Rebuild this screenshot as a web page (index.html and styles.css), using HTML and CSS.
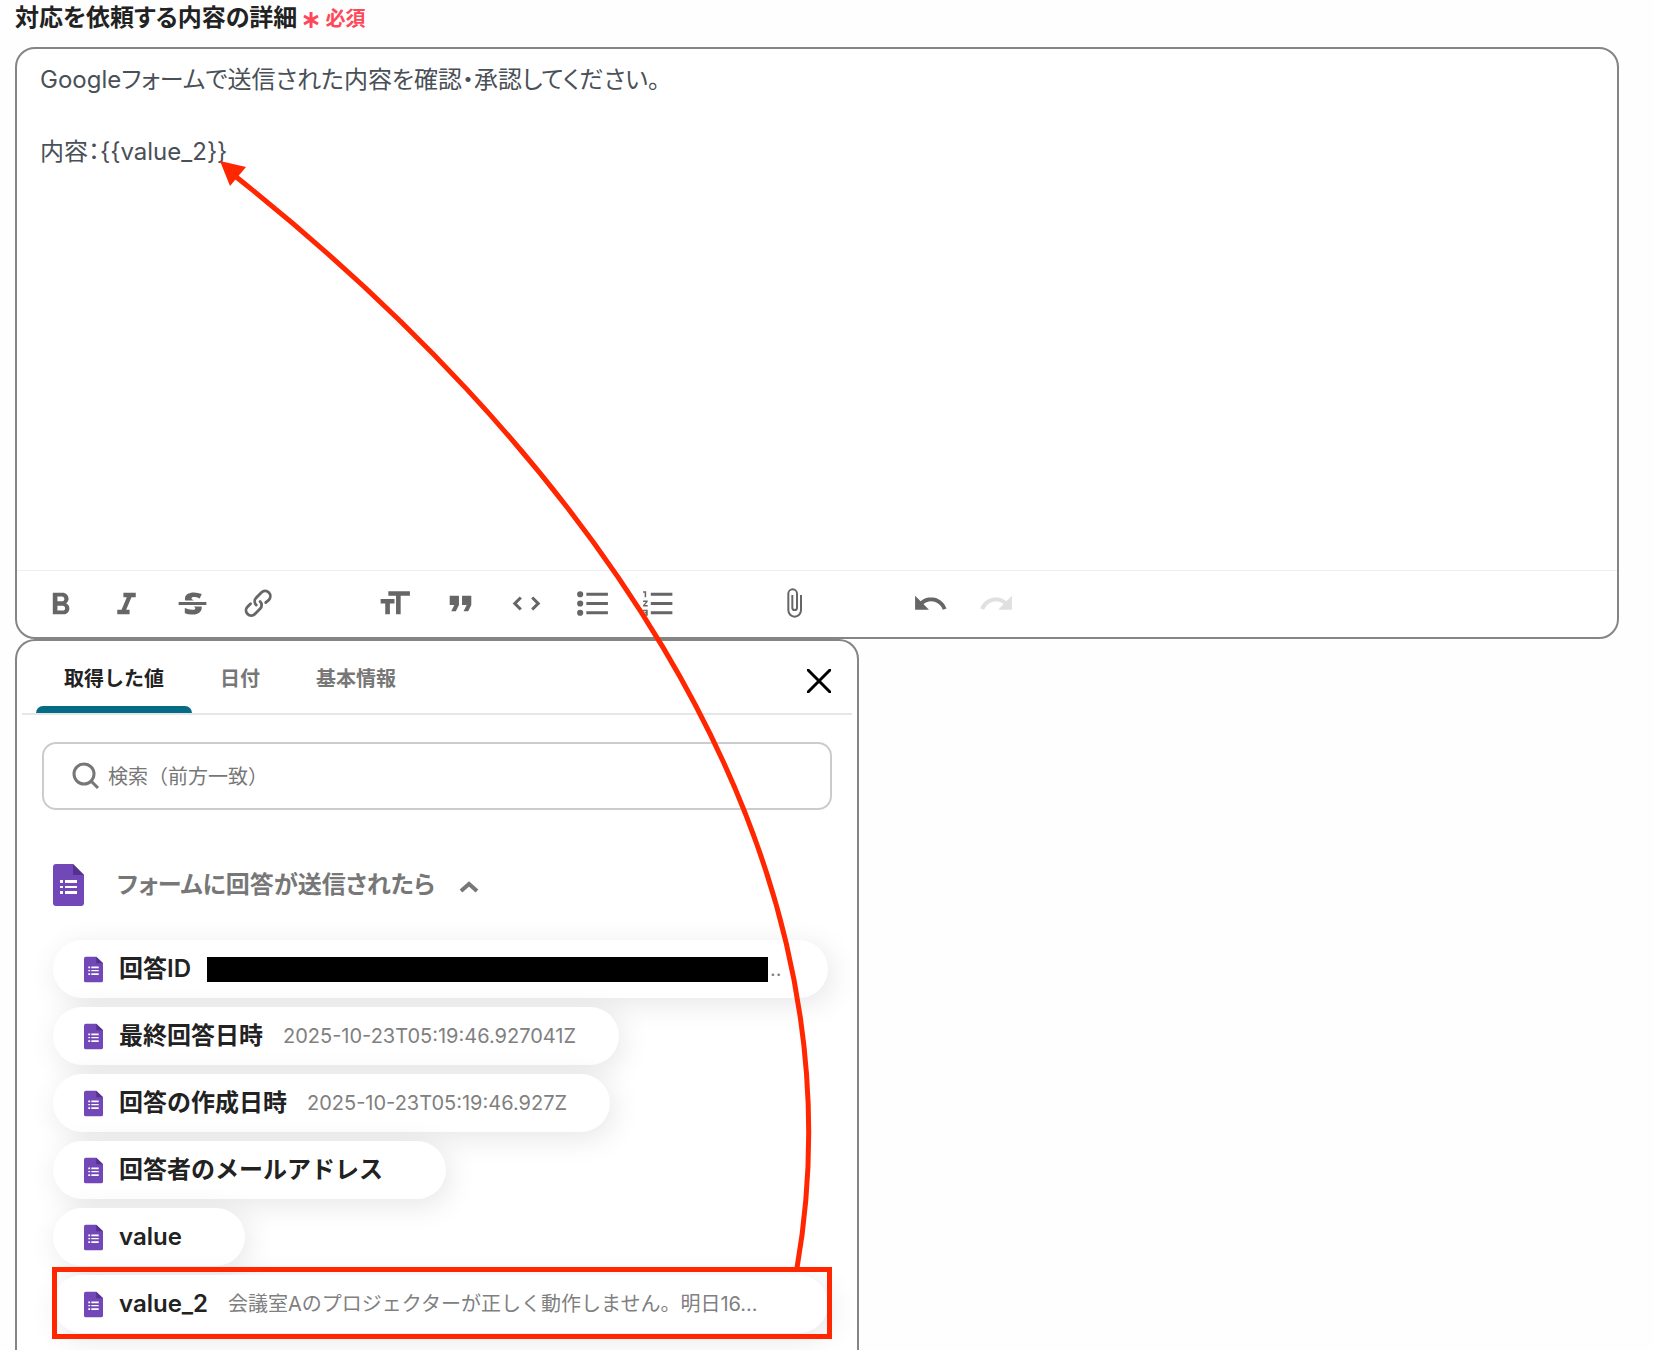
FILE: index.html
```html
<!DOCTYPE html>
<html lang="ja">
<head>
<title>対応を依頼する</title>
<meta charset="UTF-8">
<meta name="viewport" content="width=device-width, initial-scale=1.0">
<link rel="stylesheet" href="styles.css">
</head>
<body>
<svg class="defs" aria-hidden="true">
<symbol id="form-icon" viewBox="0 0 31 42">
<path d="M3 0h17l11 11v28a3 3 0 0 1-3 3H3a3 3 0 0 1-3-3V3a3 3 0 0 1 3-3z" fill="#7248b9"/>
<path d="M20 0l11 11H20z" fill="#54318c"/>
<path d="M12 16h12v3H12zM12 22h12v2H12zM12 27h12v3H12zM7 16h3v3H7zM7 22h3v2H7zM7 27h3v3H7z" fill="#fff"/>
</symbol>
</svg>
<div class="page">
<label class="field-label" for="detail">対応を依頼する内容の詳細 <span class="required"><svg viewBox="0 0 16 16"><path d="M8 0v16M1 4l14 8M15 4L1 12"/></svg>必須</span></label>
<div class="editor">
<textarea id="detail" name="detail">Googleフォームで送信された内容を確認・承認してください。

内容：{{value_2}}</textarea>
<div class="toolbar">
<div class="tool-group">
<button type="button" aria-label="太字"><svg viewBox="0 0 24 24"><path d="M15.600 11.790c.97-.67 1.650-1.770 1.650-2.790 0-2.260-1.750-4-4-4H7v14h7.040c2.090 0 3.710-1.700 3.710-3.790 0-1.520-.86-2.820-2.150-3.420zM10 7.500h3c.83 0 1.500.67 1.500 1.500s-.67 1.500-1.500 1.500h-3v-3zm3.500 9H10v-3h3.500c.83 0 1.500.67 1.500 1.500s-.67 1.500-1.500 1.500z"/></svg></button>
<button type="button" aria-label="斜体"><svg viewBox="0 0 24 24"><path d="M10 5v3h2.210l-3.420 8H6v3h8v-3h-2.210l3.420-8H18V5z"/></svg></button>
<button type="button" aria-label="取り消し線"><svg viewBox="0 0 24 24"><path d="M12.730 14l.28.14c.26.15.45.3.57.44.12.14.18.3.18.5 0 .3-.15.56-.44.75-.3.2-.76.3-1.390.3A13.520 13.520 0 0 1 7 14.950v3.370a10.640 10.640 0 0 0 4.840.88c1.260 0 2.350-.19 3.280-.56.93-.37 1.640-.9 2.140-1.570s.74-1.450.74-2.320c0-.26-.02-.51-.06-.75h-5.210zm-5.500-4c-.08-.34-.12-.7-.12-1.100 0-1.290.52-2.300 1.580-3.020 1.050-.72 2.500-1.080 4.340-1.080 1.620 0 3.280.34 4.970 1l-1.300 2.930c-1.470-.6-2.730-.9-3.800-.9-.55 0-.96.08-1.200.26-.26.17-.38.38-.38.64 0 .27.16.52.48.74.17.12.53.3 1.050.53H7.230zM3 13h18v-2H3v2z"/></svg></button>
<button type="button" aria-label="リンク"><svg viewBox="0 0 24 24"><path d="M9.880 13.700a4.300 4.300 0 0 1 0-6.070l3.370-3.370a4.260 4.260 0 0 1 6.070 0 4.300 4.300 0 0 1 0 6.060l-1.960 1.720a.91.91 0 1 1-1.300-1.300l1.970-1.710a2.460 2.460 0 0 0-3.480-3.480l-3.380 3.370a2.460 2.460 0 0 0 0 3.480.91.91 0 1 1-1.300 1.300z"/><path d="M4.250 19.460a4.300 4.300 0 0 1 0-6.070l1.930-1.900a.91.91 0 1 1 1.300 1.300l-1.930 1.900a2.460 2.460 0 0 0 3.480 3.480l3.370-3.380c.96-.96.96-2.520 0-3.480a.91.91 0 1 1 1.300-1.300 4.300 4.300 0 0 1 0 6.070l-3.380 3.380a4.260 4.260 0 0 1-6.070 0z"/></svg></button>
</div>
<div class="tool-group">
<button type="button" aria-label="見出し"><svg viewBox="0 0 24 24"><path d="M12 9v3H9v7H6v-7H3V9h9zM8 4h14v3h-6v12h-3V7H8V4z"/></svg></button>
<button type="button" aria-label="引用"><svg viewBox="0 0 24 24"><path d="M6 17h3l2-4V7H5v6h3zm8 0h3l2-4V7h-6v6h3z"/></svg></button>
<button type="button" aria-label="コード"><svg viewBox="0 0 24 24"><path d="M18.200 12L15 15.200l1.400 1.400L21 12l-4.600-4.600L15 8.800l3.200 3.200zM5.800 12L9 8.800 7.600 7.400 3 12l4.600 4.600L9 15.200 5.800 12z"/></svg></button>
<button type="button" aria-label="箇条書き"><svg viewBox="0 0 24 24"><path d="M4 4a2 2 0 1 0 0 4 2 2 0 0 0 0-4zm0 6a2 2 0 1 0 0 4 2 2 0 0 0 0-4zm0 6a2 2 0 1 0 0 4 2 2 0 0 0 0-4zm4 3h14v-2H8v2zm0-6h14v-2H8v2zm0-8v2h14V5H8z"/></svg></button>
<button type="button" aria-label="番号付きリスト"><svg viewBox="0 0 24 24"><path d="M2 17h2v.5H3v1h1v.5H2v1h3v-4H2v1zm1-9h1V4H2v1h1v3zm-1 3h1.800L2 13.100v.9h3v-1H3.200L5 10.900V10H2v1zm5-6v2h14V5H7zm0 14h14v-2H7v2zm0-6h14v-2H7v2z"/></svg></button>
</div>
<div class="tool-group">
<button type="button" aria-label="ファイル添付"><svg class="clip" viewBox="0 0 24 24"><path d="M16.500 6v11.500a4 4 0 1 1-8 0V5a2.500 2.500 0 0 1 5 0v10.500a1 1 0 1 1-2 0V6H10v9.500a2.500 2.500 0 0 0 5 0V5a4 4 0 1 0-8 0v12.500a5.500 5.500 0 0 0 11 0V6h-1.500z"/></svg></button>
</div>
<div class="tool-group">
<button type="button" aria-label="元に戻す"><svg viewBox="0 0 24 24"><path d="M12.500 8c-2.600 0-5 1-6.900 2.600L2 7v9h9l-3.600-3.600A8 8 0 0 1 20 16l2.400-.8a10.500 10.500 0 0 0-10-7.200z"/></svg></button>
<button type="button" aria-label="やり直す" disabled><svg viewBox="0 0 24 24"><path d="M18.400 10.600a10.500 10.500 0 0 0-16.900 4.600L4 16a8 8 0 0 1 12.700-3.600L13 16h9V7l-3.600 3.600z"/></svg></button>
</div>
</div>
</div>

<div class="panel">
<div class="tabs">
<button type="button" class="tab active">取得した値</button>
<button type="button" class="tab">日付</button>
<button type="button" class="tab">基本情報</button>
<button type="button" class="close" aria-label="閉じる"><svg viewBox="0 0 24 24"><path d="M1 1l22 22M23 1L1 23"/></svg></button>
</div>
<div class="panel-body">
<label class="search">
<svg viewBox="0 0 28 28"><circle cx="12" cy="12" r="10"/><path d="M19 19l7 7"/></svg>
<input type="text" name="search" placeholder="検索（前方一致）" aria-label="検索">
</label>
<button type="button" class="group-title">
<svg class="group-icon"><use href="#form-icon"/></svg>
<span>フォームに回答が送信されたら</span>
<svg class="chevron" viewBox="0 0 20 12"><path d="M2 10l8-7 8 7"/></svg>
</button>
<div class="chips">
<button type="button" class="chip wide"><svg><use href="#form-icon"/></svg><b>回答ID</b><span class="value masked"><i></i>..</span></button>
<button type="button" class="chip"><svg><use href="#form-icon"/></svg><b>最終回答日時</b><span class="value">2025-10-23T05:19:46.927041Z</span></button>
<button type="button" class="chip"><svg><use href="#form-icon"/></svg><b>回答の作成日時</b><span class="value">2025-10-23T05:19:46.927Z</span></button>
<button type="button" class="chip"><svg><use href="#form-icon"/></svg><b>回答者のメールアドレス</b><span class="value"></span></button>
<button type="button" class="chip"><svg><use href="#form-icon"/></svg><b>value</b><span class="value"></span></button>
<button type="button" class="chip wide"><svg><use href="#form-icon"/></svg><b>value_2</b><span class="value">会議室Aのプロジェクターが正しく動作しません。明日16...</span></button>
</div>
</div>
</div>

<!-- arrow from the value_2 chip to the place where it is inserted -->
<svg class="annotation" width="860" height="1350" viewBox="0 0 860 1350" aria-hidden="true">
<path class="line" d="M797 1268C875 820 549 425 235 176"/>
<path class="head" d="M220 161l26 6-16 19z"/>
<rect class="line" x="54.500" y="1269.500" width="775" height="67"/>
</svg>
</div>
</body>
</html>
```
FILE: styles.css
```css
*{
    box-sizing: border-box;
}
body{
    margin: 0;
    background: #fefefe;
    font-family: Inter, "Noto Sans CJK JP", sans-serif;
    color: #222;
}
button, input, textarea{
    font: inherit;
    color: inherit;
}
button{
    padding: 0;
    border: 0;
    background: none;
    cursor: pointer;
}
svg{
    flex: none;
}
.defs{
    display: none;
}
.page{
    position: relative;
    display: flex;
    flex-direction: column;
    height: 100vh;
    padding: 0 35px 0 15px;
    overflow: hidden;
}
.field-label{
    height: 47px;
    font-size: 24px;
    line-height: 36px;
    font-weight: 600;
    font-feature-settings: "palt";
}
.required{
    font-size: 20px;
    color: #ff4757;
}
.required svg{
    width: 16px;
    height: 16px;
    margin-right: 6px;
    vertical-align: -2px;
    fill: none;
    stroke: #ff4757;
    stroke-width: 3;
}
.editor{
    display: flex;
    flex-direction: column;
    border: 2px solid #858585;
    border-radius: 20px;
    background: #fff;
}
.editor textarea{
    display: block;
    height: 522px;
    padding: 13px 23px;
    border: 0;
    border-bottom: 1px solid #eee;
    border-radius: 20px 20px 0 0;
    outline: 0;
    resize: none;
    background: none;
    font-size: 24px;
    line-height: 36px;
    font-feature-settings: "palt";
    color: #495057;
}
.toolbar{
    display: flex;
    gap: 70px;
    height: 66px;
    padding: 0 10px 2px;
}
.tool-group{
    display: flex;
}
.tool-group button{
    display: flex;
    align-items: center;
    justify-content: center;
    width: 66px;
}
.tool-group svg{
    width: 37px;
    height: 37px;
    fill: #666;
}
.tool-group .clip{
    width: 32px;
    height: 32px;
}
.tool-group button:disabled svg{
    fill: #e0e0e0;
}
.panel{
    flex: 1;
    width: 844px;
    max-width: 100%;
    padding: 0 5px;
    border: 2px solid #858585;
    border-bottom: 0;
    border-radius: 20px 20px 0 0;
    background: #fff;
}
.tabs{
    display: flex;
    height: 74px;
    padding: 0 21px 0 14px;
    border-bottom: 2px solid #e6e6e6;
}
.tab{
    padding: 8px 28px 0;
    border-bottom: 7px solid transparent;
    font-size: 20px;
    font-weight: 600;
    color: #777;
}
.tab.active{
    position: relative;
    color: #222;
}
.tab.active::after{
    content: "";
    position: absolute;
    left: 0;
    right: 0;
    bottom: -7px;
    height: 7px;
    border-radius: 7px 7px 0 0;
    background: #066b84;
}
.close{
    display: flex;
    align-items: center;
    margin-left: auto;
    padding-top: 8px;
}
.close svg{
    width: 24px;
    height: 24px;
    fill: none;
    stroke: #000;
    stroke-width: 3;
    stroke-linecap: round;
}
.panel-body{
    padding: 27px 20px 0;
}
.search{
    display: flex;
    align-items: center;
    gap: 8px;
    height: 68px;
    padding: 0 28px;
    border: 2px solid #ccc;
    border-radius: 14px;
}
.search svg{
    width: 28px;
    height: 28px;
    fill: none;
    stroke: #777;
    stroke-width: 3;
}
.search input{
    flex: 1;
    padding: 2px 0 0;
    border: 0;
    outline: 0;
    background: none;
    font-size: 20px;
}
.search input::placeholder{
    color: #777;
    opacity: 1;
}
.group-title{
    display: flex;
    align-items: center;
    margin: 54px 0 34px 11px;
    font-size: 24px;
    line-height: 42px;
    font-weight: 600;
    font-feature-settings: "palt";
    color: #777;
}
.group-icon{
    width: 31px;
    height: 42px;
    margin-right: 33px;
}
.chevron{
    width: 20px;
    height: 12px;
    margin: 4px 0 0 24px;
    fill: none;
    stroke: #777;
    stroke-width: 4;
}
.chips{
    display: flex;
    flex-direction: column;
    align-items: flex-start;
    gap: 9px;
    padding: 0 4px 0 11px;
}
.chip{
    display: flex;
    align-items: center;
    height: 58px;
    max-width: 100%;
    padding: 0 43px 0 31px;
    border-radius: 29px;
    background: #fff;
    box-shadow: 4px 6px 30px rgba(0, 0, 0, 0.1);
    line-height: 24px;
    white-space: nowrap;
}
.chip svg{
    width: 19px;
    height: 27px;
    margin-right: 16px;
}
.chip b{
    font-size: 24px;
    font-weight: 600;
}
.value{
    margin-left: 20px;
    font-size: 20px;
    color: #808080;
}
.masked{
    display: flex;
    align-items: center;
    margin-left: 16px;
}
.masked i{
    width: 561px;
    height: 25px;
    margin-right: 2px;
    background: #000;
}
.wide{
    width: 100%;
}
.annotation{
    position: absolute;
    top: 0;
    left: 0;
    pointer-events: none;
}
.annotation .line{
    fill: none;
    stroke: #ff2600;
    stroke-width: 5;
}
.annotation .head{
    fill: #ff2600;
}
```
